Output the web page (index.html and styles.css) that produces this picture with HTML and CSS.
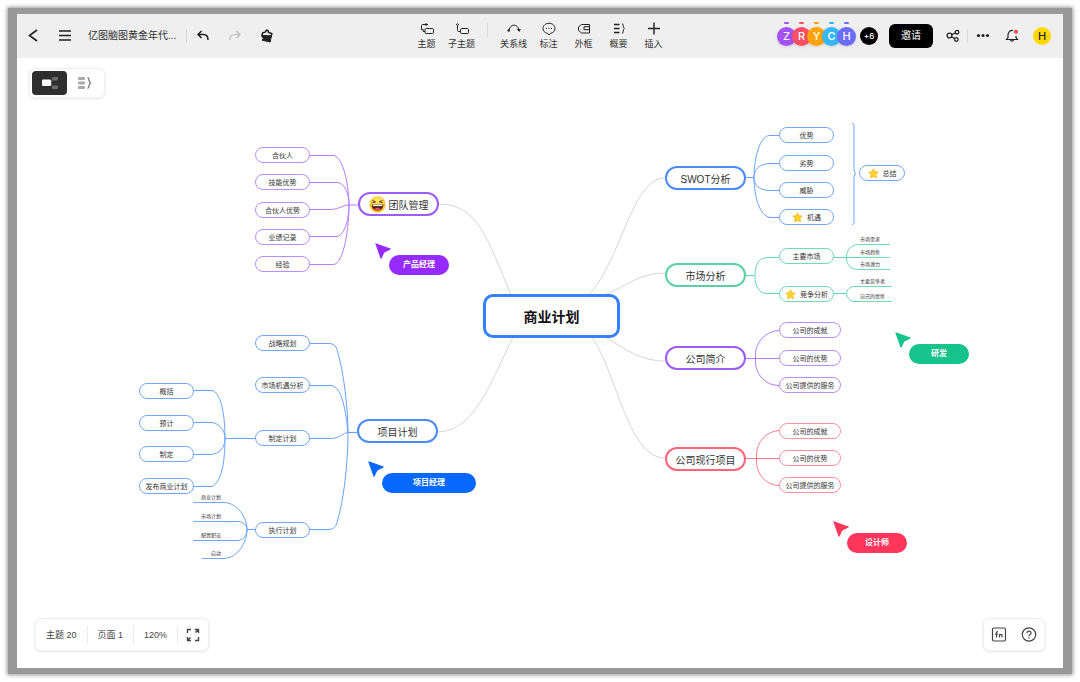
FILE: index.html
```html
<!DOCTYPE html>
<html lang="zh-CN">
<head>
<meta charset="utf-8">
<title>商业计划</title>
<link rel="stylesheet" href="styles.css">
</head>
<body>
<svg class="defs" aria-hidden="true">
  <symbol id="star" viewBox="0 0 12 12"><path d="M6 .8 7.600 4l3.600.5-2.600 2.600.6 3.600L6 9.200l-3.200 1.500.6-3.600L.8 4.500 4.400 4Z" fill="#ffd426" stroke="#f5b92e" stroke-width=".9" stroke-linejoin="round"/></symbol>
  <symbol id="pointer" viewBox="0 0 16 16"><path d="M.8.8 15.400 6 9 9.200 6 15.400Z" fill="currentColor" stroke="currentColor" stroke-linejoin="round"/></symbol>
</svg>
<div class="window">
  <header class="topbar">
    <div class="bar-left">
      <button class="icon-btn" aria-label="返回"><svg width="14" height="14" viewBox="0 0 14 14"><path d="M11 1 3.500 6.500l7.500 5.500" stroke-width="1.600"/></svg></button>
      <button class="icon-btn" aria-label="菜单"><svg width="14" height="14" viewBox="0 0 14 14"><path d="M1 2h12M1 6.500h12M1 11h12" stroke-width="1.500"/></svg></button>
      <span class="doc-title">亿图脑图黄金年代...</span>
      <span class="divider"></span>
      <button class="icon-btn" aria-label="撤销"><svg width="14" height="14" viewBox="0 0 14 14"><path d="M5.500 2 2 5.500 5.500 9M2 5.500h5.500c3 0 4.500 1.700 4.500 5.500" stroke-width="1.500"/></svg></button>
      <button class="icon-btn faded" aria-label="重做"><svg width="14" height="14" viewBox="0 0 14 14"><path d="M8.500 2 12 5.500 8.500 9M12 5.500H6.500C3.500 5.500 2 7.200 2 11" stroke-width="1.200"/></svg></button>
      <button class="icon-btn" aria-label="格式刷"><svg width="14" height="14" viewBox="0 0 14 14"><path d="M2.500 4 5.500 3l.8-1.800 1.900.4.2 1.800 3.400 1.200-.6 3L2 6.800Z" stroke-width="1.500"/><path d="M1.800 6.800h9.400l-.9 6.200L2 11.200l1.300-1.700Z" fill="currentColor"/></svg></button>
    </div>
    <nav class="tools" aria-label="工具">
      <button class="tool"><svg width="14" height="14" viewBox="0 0 14 14"><rect x="5" y="6.500" width="8.500" height="5" rx="1.200"/><path d="M5 9.500H3.200V7.500H1.500V3.700c0-.8.500-1.200 1.200-1.200H8M6 1v3"/></svg>主题</button>
      <button class="tool"><svg width="14" height="14" viewBox="0 0 14 14"><rect x="5.500" y="6.500" width="8" height="5" rx="1.200"/><path d="M5.500 9.500H4C2.700 9.500 2.500 9 2.500 7.700V3M1 3l1.500-1.500L4 3"/></svg>子主题</button>
      <span class="divider tool-divider"></span>
      <button class="tool"><svg width="14" height="14" viewBox="0 0 14 14"><path d="M2 8C3.500 1.500 10.500 1.500 12 8"/><path d="M9.800 7h4L12.300 10Z" fill="currentColor" stroke="none"/><circle cx="1.700" cy="8.500" r="1.200" fill="currentColor" stroke="none"/></svg>关系线</button>
      <button class="tool"><svg width="14" height="14" viewBox="0 0 14 14"><path d="M7 12.800 5.300 11.300C2.700 10.800 1 9 1 6.500 1 3.400 3.600 1.300 7 1.300s6 2.100 6 5.200c0 2.500-1.700 4.300-4.300 4.800Z"/><path d="M4 6.500h1M6.500 6.500h1M9 6.500h1"/></svg>标注</button>
      <button class="tool"><svg width="14" height="14" viewBox="0 0 14 14"><path d="M4.500 2.500H12.500v8.500H4.500L1.500 8.500V5ZM7 4.700v3h5M12 4.700H7"/></svg>外框</button>
      <button class="tool"><svg width="14" height="14" viewBox="0 0 14 14"><path d="M2 2.500h5.500M2 6.500h5.500M2 10.500h5.500" stroke-width="1.400"/><path d="M10 1.500c1.600 0 .8 4 2.300 5-1.500 1-.7 5-2.300 5"/></svg>概要</button>
      <button class="tool"><svg width="14" height="14" viewBox="0 0 14 14"><path d="M1 6.500h12M7 .5v12" stroke-width="1.400"/></svg>插入</button>
    </nav>
    <div class="bar-right">
      <div class="people">
        <span class="avatar av-z">Z</span><span class="avatar av-r">R</span><span class="avatar av-y">Y</span><span class="avatar av-c">C</span><span class="avatar av-h">H</span>
      </div>
      <span class="more-people">+6</span>
      <button class="invite">邀请</button>
      <button class="icon-btn small" aria-label="分享"><svg width="14" height="14" viewBox="0 0 14 14"><g stroke-width="1.300"><circle cx="3.500" cy="6.500" r="2.400"/><circle cx="11" cy="3.200" r="1.800"/><circle cx="10.300" cy="10.500" r="1.800"/><path d="M5.700 5.600 9.300 4M5.500 7.800l3.300 1.900"/></g></svg></button>
      <span class="divider"></span>
      <button class="icon-btn small" aria-label="更多"><svg width="14" height="14" viewBox="0 0 14 14"><g fill="currentColor" stroke="none"><circle cx="2.500" cy="6.500" r="1.600"/><circle cx="7" cy="6.500" r="1.600"/><circle cx="11.500" cy="6.500" r="1.600"/></g></svg></button>
      <button class="icon-btn small bell" aria-label="通知"><svg width="14" height="14" viewBox="0 0 14 14"><path d="M8 1.500C5 1.200 3 3.200 3 6v2.500L1.500 10.500h11L11 8.500V7M5.200 10.500c.4 2.200 3.200 2.200 3.600 0" stroke-width="1.200"/><circle cx="11" cy="2.800" r="2" fill="#f04848" stroke="none"/></svg></button>
      <span class="me">H</span>
    </div>
  </header>

  <main class="canvas">
    <svg class="links" width="1046" height="610" viewBox="17 58 1046 610" aria-hidden="true">
      <g class="ln-gray">
        <path d="M438 204C478 204 486 236 511 295"/>
        <path d="M437 432C474 432 490 384 513 337"/>
        <path d="M589 295C622 258 632 178 665 178"/>
        <path d="M605 295C628 285 640 273 665 273"/>
        <path d="M605 337C626 349 640 361 665 361"/>
        <path d="M592 337C618 376 628 458 665 458"/>
      </g>
      <g class="ln-purple">
        <path d="M309 155.500h25C344 158 349 188 349 205h9"/>
        <path d="M309 182.500h28C345 183 349 194 349 205"/>
        <path d="M309 209.500h22C340 209 343 205 349 205"/>
        <path d="M309 236.500h28C345 235 349 218 349 205"/>
        <path d="M309 264.500h25C344 262 349 228 349 205"/>
        <path d="M745 358.500h34M779 330.500C765 331 755.500 343 755.500 354v8C755.500 374 765 385.500 779 385.500"/>
      </g>
      <g class="ln-blue">
        <path d="M309 343.500h20q6 0 8 6C344 372 348 410 348 432.500h9"/>
        <path d="M309 385.500h22C342 386 346 412 348 432.500"/>
        <path d="M309 438.500h22C341 438 343 432.500 348 432.500"/>
        <path d="M309 529.500h20q6 0 8-7C344 500 348 462 348 432.500"/>
        <path d="M194 390.500h18C222 393 225 418 225 438.500h30"/>
        <path d="M194 422.500h17C219 423 225 430 225 438.500"/>
        <path d="M194 454.500h17C219 454 225 448 225 438.500"/>
        <path d="M194 486.500h18C222 482 225 460 225 438.500"/>
        <path d="M220 502.500h4C238 503 247 518 247 529.500h8"/>
        <path d="M220 521.500h18C243 522 247 525 247 529.500"/>
        <path d="M220 540.500h18C243 540 247 536 247 529.500"/>
        <path d="M220 558.500h4C238 558 247 542 247 529.500"/>
        <path d="M745 177.500h9M779 135.500h-9C760 135 754 158 754 177.500S760 216 770 217.500h9"/>
        <path d="M779 163.500h-10C760 164 754 169 754 177.500M779 190.500h-10C760 190 754 186 754 177.500"/>
        <path d="M852 123.500c2 0 2 1 2 3v43q0 4 2 4q-2 0-2 4v43c0 3 0 4-2 4"/>
      </g>
      <g class="ln-green">
        <path d="M745 275.500h10M779 257.500h-12C759 258 755 264 755 275.500S759 293 767 293.500h12"/>
        <path d="M833 257.500h28M861 244.500h-3C851 245 846.500 250 846.500 257.500S851 269.500 858 269.500h3M861 257.500h29"/>
        <path d="M833 293.500h13.500M861 286.500h-7C850 287 846.500 290 846.500 293.500S850 301.500 854 301.500h7"/>
      </g>
      <g class="ln-red">
        <path d="M745 458.500h34M779 430.500C766 431 756.500 443 756.500 454v8C756.500 474 766 485.500 779 485.500"/>
      </g>
    </svg>

    <h1 class="root">商业计划</h1>

    <div class="topic purple p-team"><svg width="17" height="17" viewBox="0 0 16 16" aria-hidden="true"><circle cx="8" cy="8" r="7.700" fill="#fbc531"/><circle cx="8" cy="6.500" r="5.500" fill="#ffdf55"/><path d="M2.500 8h11c0 3.500-2.300 5.700-5.500 5.700S2.500 11.500 2.500 8Z" fill="#4a1f1c"/><path d="M3.500 8.200h9v1.300h-9Z" fill="#fff"/><path d="M5 12.300c1.500-1.600 4.500-1.600 6 0-1.600 1.500-4.400 1.500-6 0Z" fill="#f0505a"/><path d="M3.300 4.200l2.800 1.300-2.800.8M12.700 4.200 9.900 5.500l2.800.8" fill="none" stroke="#4a1f1c" stroke-width=".9"/></svg>团队管理</div>
    <div class="topic blue p-project">项目计划</div>
    <div class="topic blue p-swot">SWOT分析</div>
    <div class="topic green p-market">市场分析</div>
    <div class="topic purple p-about">公司简介</div>
    <div class="topic red p-current">公司现行项目</div>

    <div class="sub purple col-a r-partner">合伙人</div>
    <div class="sub purple col-a r-skill">技能优势</div>
    <div class="sub purple col-a r-edge">合伙人优势</div>
    <div class="sub purple col-a r-record">业绩记录</div>
    <div class="sub purple col-a r-exp">经验</div>

    <div class="sub blue col-a r-strategy">战略规划</div>
    <div class="sub blue col-a r-chance">市场机遇分析</div>
    <div class="sub blue col-a r-make">制定计划</div>
    <div class="sub blue col-a r-run">执行计划</div>

    <div class="sub blue col-b r-sum">概括</div>
    <div class="sub blue col-b r-est">预计</div>
    <div class="sub blue col-b r-set">制定</div>
    <div class="sub blue col-b r-publish">发布商业计划</div>

    <div class="leaf blue leaf-left l-biz">商业计划</div>
    <div class="leaf blue leaf-left l-mkt">市场计划</div>
    <div class="leaf blue leaf-left l-staff">配置职员</div>
    <div class="leaf blue leaf-left l-start">启动</div>

    <div class="sub blue col-c r-s">优势</div>
    <div class="sub blue col-c r-w">劣势</div>
    <div class="sub blue col-c r-t">威胁</div>
    <div class="sub blue col-c r-o"><svg width="11" height="11"><use href="#star"/></svg>机遇</div>
    <div class="sub blue summary"><svg width="11" height="11"><use href="#star"/></svg>总结</div>

    <div class="sub green col-c r-main">主要市场</div>
    <div class="sub green col-c r-comp"><svg width="11" height="11"><use href="#star"/></svg>竞争分析</div>
    <div class="leaf green leaf-right l-need">市场需求</div>
    <div class="leaf green leaf-right l-trend">市场趋势</div>
    <div class="leaf green leaf-right l-pot">市场潜力</div>
    <div class="leaf green leaf-right l-rival">主要竞争者</div>
    <div class="leaf green leaf-right l-own">自己的优势</div>

    <div class="sub purple col-c wide r-a1">公司的成就</div>
    <div class="sub purple col-c wide r-a2">公司的优势</div>
    <div class="sub purple col-c wide r-a3">公司提供的服务</div>
    <div class="sub red col-c wide r-c1">公司的成就</div>
    <div class="sub red col-c wide r-c2">公司的优势</div>
    <div class="sub red col-c wide r-c3">公司提供的服务</div>

    <div class="user u-product"><svg width="16" height="16"><use href="#pointer"/></svg><span>产品经理</span></div>
    <div class="user u-project"><svg width="16" height="16"><use href="#pointer"/></svg><span>项目经理</span></div>
    <div class="user u-dev"><svg width="16" height="16"><use href="#pointer"/></svg><span>研发</span></div>
    <div class="user u-design"><svg width="16" height="16"><use href="#pointer"/></svg><span>设计师</span></div>

    <div class="panel view-switch">
      <button class="view active" aria-label="导图"><svg width="18" height="14" viewBox="0 0 18 14"><rect x="1" y="3.500" width="9" height="6.500" rx="1" fill="#fff" stroke="none"/><g fill="#6a6a6a" stroke="none"><rect x="11" y="1" width="6" height="3.500" rx="1"/><rect x="11" y="9.500" width="6" height="3.500" rx="1"/></g><path d="M10 7c1.500 0 .5-4 2-4M10 7c1.500 0 .5 4 2 4" stroke="#6a6a6a"/></svg></button>
      <button class="view" aria-label="大纲"><svg width="16" height="14" viewBox="0 0 16 14"><g fill="#aaa" stroke="none"><rect x="1" y="1" width="7" height="3" rx="1"/><rect x="1" y="5.500" width="7" height="3" rx="1"/><rect x="1" y="10" width="7" height="3" rx="1"/></g><path d="M10.500 1.500c2 0 .8 4.500 3 5.500-2.200 1-1 5.500-3 5.500" stroke-width="1.300"/></svg></button>
    </div>

    <div class="panel status">
      <span class="stat">主题 20</span>
      <span class="stat">页面 1</span>
      <button class="stat">120%</button>
      <button class="panel-btn" aria-label="全屏"><svg width="14" height="14" viewBox="0 0 14 14"><path d="M1.500 5V1.500H5M12.500 9v3.500H9M9 1.500h3.500V5M12.500 1.500 9.500 4.500M5 12.500H1.500V9M1.500 12.500l3-3" stroke-width="1.400"/></svg></button>
    </div>

    <div class="panel help">
      <button class="panel-btn" aria-label="快捷键"><svg width="16" height="16" viewBox="0 0 16 16"><g stroke-width="1.200"><rect x="1.500" y="1" width="13" height="13" rx="1.500"/><path d="M5.500 10.500V6c0-1 .5-1.400 1.500-1.300M4.200 7.200h2.600M8.500 10.500V7M8.500 8.500c.6-1.500 2.500-1.500 2.500 0v2"/></g></svg></button>
      <button class="panel-btn" aria-label="帮助"><svg width="16" height="16" viewBox="0 0 16 16"><g stroke-width="1.200"><circle cx="8" cy="7.500" r="6.700"/><path d="M6 6.200c0-2.700 4-2.700 4 0C10 7.600 8 7.500 8 9.200M8 10.300v1.300"/></g></svg></button>
    </div>
  </main>
</div>
</body>
</html>
```
FILE: styles.css
```css
* { box-sizing: border-box; }

body {
  margin: 0;
  padding: 8px;
  height: 100vh;
  display: flex;
  background: #fff;
  color: #333;
  font-family: "Liberation Sans", "Noto Sans CJK SC", sans-serif;
}

.defs { position: absolute; width: 0; height: 0; }

button {
  border: 0;
  padding: 0;
  background: none;
  color: inherit;
  font: inherit;
}

svg { fill: none; stroke: currentColor; flex: none; }
symbol { stroke: none; }

.window {
  flex: 1;
  min-width: 0;
  display: flex;
  flex-direction: column;
  background: #fff;
  border: solid #999;
  border-width: 6px 9px;
  box-shadow: 0 0 4px 1px #999;
}

/* Top bar */
.topbar {
  display: grid;
  grid-template-columns: 1fr auto 1fr;
  height: 44px;
  flex: none;
  background: #efefef;
}

.bar-left, .bar-right, .tools { display: flex; align-items: center; }
.bar-right { justify-content: flex-end; padding-right: 12px; }

.icon-btn {
  width: 32px;
  height: 32px;
  display: flex;
  align-items: center;
  justify-content: center;
  color: #222;
}
.icon-btn.small { width: 24px; }
.icon-btn.faded { color: #bbb; }

.doc-title {
  margin: 0 7px;
  font-size: 10px;
  line-height: 16px;
  white-space: nowrap;
  min-width: 91px;
}

.divider { width: 1px; height: 14px; background: #d8d8d8; }

.tool {
  width: 35px;
  display: flex;
  flex-direction: column;
  align-items: center;
  gap: 2px;
  padding-top: 1px;
  font-size: 9px;
  line-height: 13px;
  white-space: nowrap;
}
.tool svg { color: #222; }
.tool-divider { margin: 0 8px 12px; }

.people { display: flex; }
.avatar {
  position: relative;
  width: 19px;
  height: 19px;
  margin-left: -4px;
  border-radius: 50%;
  background: var(--c);
  box-shadow: 0 1px 3px #0002;
  color: #fff;
  font: 500 11px/19px Inter, sans-serif;
  text-align: center;
}
.avatar::before {
  content: "";
  position: absolute;
  top: -5px;
  left: 7px;
  width: 5px;
  height: 2px;
  border-radius: 1px;
  background: var(--c);
}
.av-z { --c: #a352f5; }
.av-r { --c: #fb5064; }
.av-y { --c: #ffa300; }
.av-c { --c: #36b8f8; }
.av-h { --c: #6c6cfa; }

.more-people, .me {
  width: 18px;
  height: 18px;
  border-radius: 50%;
  font: 500 8px/18px Inter, sans-serif;
  text-align: center;
}
.more-people { margin: 0 11px 0 4px; background: #000; color: #fff; }
.me { margin-left: 9px; background: #ffd800; color: #222; font-size: 11px; }

.invite {
  width: 44px;
  height: 24px;
  margin-right: 8px;
  border-radius: 6px;
  background: #000;
  color: #fff;
  font-size: 10px;
  line-height: 22px;
}
.bar-right .divider { margin: 0 3px 0 2px; }
.bell { margin-left: 5px; }

/* Canvas */
.canvas { position: relative; flex: 1; overflow: hidden; }
.links { position: absolute; left: 0; top: 0; }
.ln-gray { stroke: #d6d6d6; }
.ln-purple { stroke: #b47eff; }
.ln-blue { stroke: #6aa3ff; }
.ln-green { stroke: #66d8af; }
.ln-red { stroke: #ff7c8d; }

.purple { --main: #9c5cf8; --soft: #bb8cff; }
.blue { --main: #4a8dfa; --soft: #72a8ff; }
.green { --main: #5ad1a5; --soft: #72dab5; }
.red { --main: #ff6579; --soft: #ff909e; }

.root, .topic, .sub {
  position: absolute;
  display: flex;
  align-items: center;
  justify-content: center;
  background: #fff;
  white-space: nowrap;
}
.root {
  left: 466px;
  top: 236px;
  width: 137px;
  height: 44px;
  margin: 0;
  border: 3px solid #3481fb;
  border-radius: 10px;
  color: #111;
  font-size: 14px;
  font-weight: 700;
}
.topic {
  width: 81px;
  height: 24px;
  gap: 3px;
  border: 2px solid var(--main);
  border-radius: 12px;
  font-size: 10px;
}
.topic svg, .sub svg, .user svg { stroke: none; }
.sub {
  width: 55px;
  height: 16px;
  gap: 4px;
  border: 1px solid var(--soft);
  border-radius: 8px;
  font-size: 7px;
}
.sub.wide { width: 62px; }
.leaf {
  position: absolute;
  height: 9px;
  border-bottom: 1px solid var(--soft);
  font-size: 5px;
  line-height: 6px;
  white-space: nowrap;
}

.p-team { left: 341px; top: 134px; }
.p-project { left: 340px; top: 361px; }
.p-swot { left: 648px; top: 108px; }
.p-market { left: 648px; top: 205px; }
.p-about { left: 648px; top: 288px; }
.p-current { left: 648px; top: 389px; }

.col-a { left: 238px; }
.col-b { left: 122px; }
.col-c { left: 762px; }

.r-partner { top: 89px; }
.r-skill { top: 116px; }
.r-edge { top: 144px; }
.r-record { top: 171px; }
.r-exp { top: 198px; }
.r-strategy { top: 277px; }
.r-chance { top: 319px; }
.r-make { top: 372px; }
.r-run { top: 464px; }
.r-sum { top: 325px; }
.r-est { top: 357px; }
.r-set { top: 388px; }
.r-publish { top: 420px; }
.r-s { top: 69px; }
.r-w { top: 97px; }
.r-t { top: 124px; }
.r-o { top: 151px; }
.r-main { top: 190px; }
.r-comp { top: 228px; }
.r-a1 { top: 264px; }
.r-a2 { top: 292px; }
.r-a3 { top: 319px; }
.r-c1 { top: 365px; }
.r-c2 { top: 392px; }
.r-c3 { top: 419px; }
.sub.summary { left: 842px; top: 107px; width: 46px; }

.leaf-left { left: 176px; width: 28px; text-align: right; }
.leaf-right { left: 843px; width: 30px; }
.l-biz { top: 436px; }
.l-mkt { top: 455px; }
.l-staff { top: 474px; }
.leaf.l-start { top: 492px; left: 185px; width: 19px; }
.l-need { top: 178px; }
.l-trend { top: 191px; }
.l-pot { top: 203px; }
.l-rival { top: 220px; }
.l-own { top: 235px; }
.l-rival, .l-own { width: 32px; }

/* Collaborator cursors */
.user {
  position: absolute;
  display: flex;
  align-items: flex-start;
  color: var(--c);
}
.user span {
  width: 60px;
  height: 20px;
  margin: 12px 0 0 -2px;
  border-radius: 10px;
  background: var(--c);
  color: #fff;
  font-size: 8px;
  font-weight: 700;
  line-height: 19px;
  text-align: center;
}
.u-product { left: 358px; top: 185px; --c: #962bff; }
.u-project { left: 351px; top: 403px; --c: #0668ff; }
.u-project span { width: 94px; }
.u-dev { left: 878px; top: 274px; --c: #16c38a; }
.u-design { left: 816px; top: 463px; --c: #ff365c; }

/* Floating panels */
.panel {
  position: absolute;
  display: flex;
  align-items: center;
  background: #fff;
  border: 1px solid #f0f0f0;
  border-radius: 6px;
  box-shadow: 0 1px 3px #0000001a;
}
.view-switch { left: 12px; top: 10px; padding: 2px; }
.view {
  width: 35px;
  height: 24px;
  display: flex;
  align-items: center;
  justify-content: center;
  border-radius: 4px;
  color: #777;
}
.view.active { background: #2e2e2e; }

.status, .help { bottom: 17px; height: 33px; color: #444; }
.status { left: 18px; font-size: 9px; }
.help { right: 18px; }
.stat {
  padding: 0 10px;
  border-right: 1px solid #eaeaea;
  line-height: 18px;
  white-space: nowrap;
}
.panel-btn {
  width: 30px;
  height: 30px;
  display: flex;
  align-items: center;
  justify-content: center;
}
```
